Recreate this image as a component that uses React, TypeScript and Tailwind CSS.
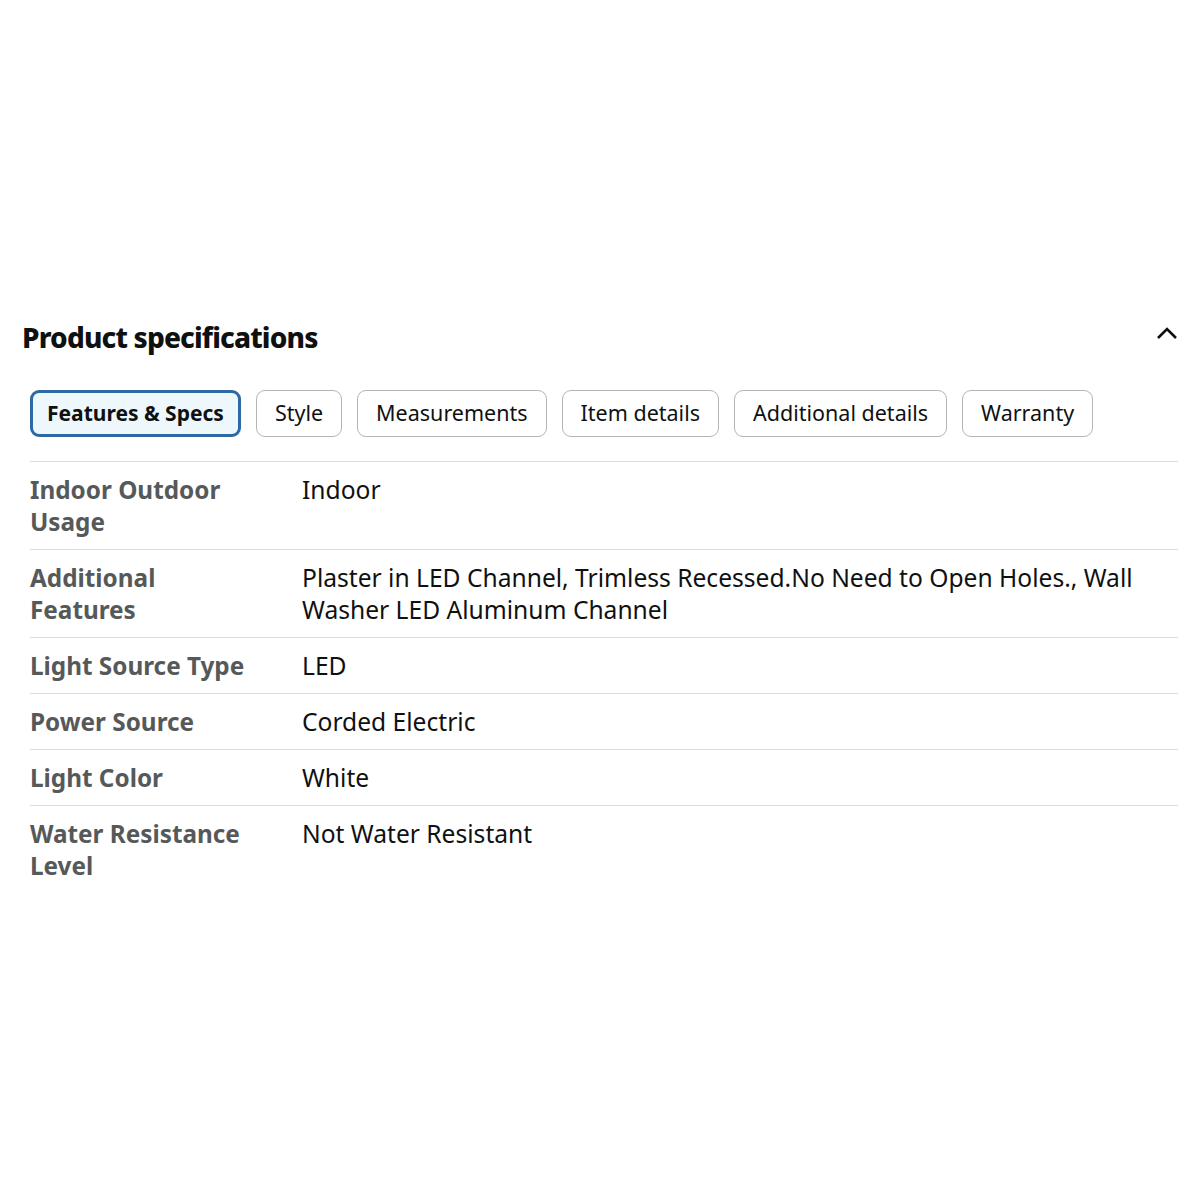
import React from 'react';

const tabs = ['Features & Specs', 'Style', 'Measurements', 'Item details', 'Additional details', 'Warranty'];

const specs: [string, string][] = [
  ['Indoor Outdoor Usage', 'Indoor'],
  ['Additional Features', 'Plaster in LED Channel, Trimless Recessed.No Need to Open Holes., Wall Washer LED Aluminum Channel'],
  ['Light Source Type', 'LED'],
  ['Power Source', 'Corded Electric'],
  ['Light Color', 'White'],
  ['Water Resistance Level', 'Not Water Resistant'],
];

const App = () => {
  const [active, setActive] = React.useState(0);

  return (
    <div className="min-h-[1200px] w-[1200px] bg-white font-['Noto_Sans',sans-serif] text-[#0f1111]">
      <div className="pt-[318px] pl-[22px] pr-[22px]">
        {/* header */}
        <div className="flex items-center justify-between h-[38px]">
          <h2 className="text-[28px] font-extrabold tracking-[-0.03em] leading-[38px] text-[#0f1111]">
            Product specifications
          </h2>
          <svg width="22" height="14" viewBox="0 0 22 14" className="-mt-[8px]">
            <path d="M2 12 L11 3 L20 12" fill="none" stroke="#0f1111" strokeWidth="2.6" />
          </svg>
        </div>

        <div className="pl-[8px]">
          {/* tabs */}
          <div className="flex gap-[15px] mt-[34px]">
            {tabs.map((t, i) => (
              <button
                key={t}
                onClick={() => setActive(i)}
                className={
                  i === active
                    ? 'h-[47px] px-[14px] rounded-[9px] border-[3px] border-[#2d6aa5] bg-[#edf7fc] text-[21px] font-bold text-[#0f1111]'
                    : 'h-[47px] px-[18px] rounded-[9px] border border-[#b5b5b5] bg-white text-[21.5px] text-[#0f1111]'
                }
              >
                {t}
              </button>
            ))}
          </div>

          {/* spec table */}
          <div className="mt-[24px] border-t border-[#dedede]">
            {specs.map(([k, v], i) => (
              <div
                key={k}
                className={
                  'grid grid-cols-[272px_1fr] pt-[12px] pb-[11px] leading-[32px] ' +
                  (i < specs.length - 1 ? 'border-b border-[#dedede]' : '')
                }
              >
                <div className="pr-[44px] text-[24.3px] font-bold text-[#565959]">{k}</div>
                <div className="text-[24.6px] text-[#0f1111]">{v}</div>
              </div>
            ))}
          </div>
        </div>
      </div>
    </div>
  );
};

export default App;
